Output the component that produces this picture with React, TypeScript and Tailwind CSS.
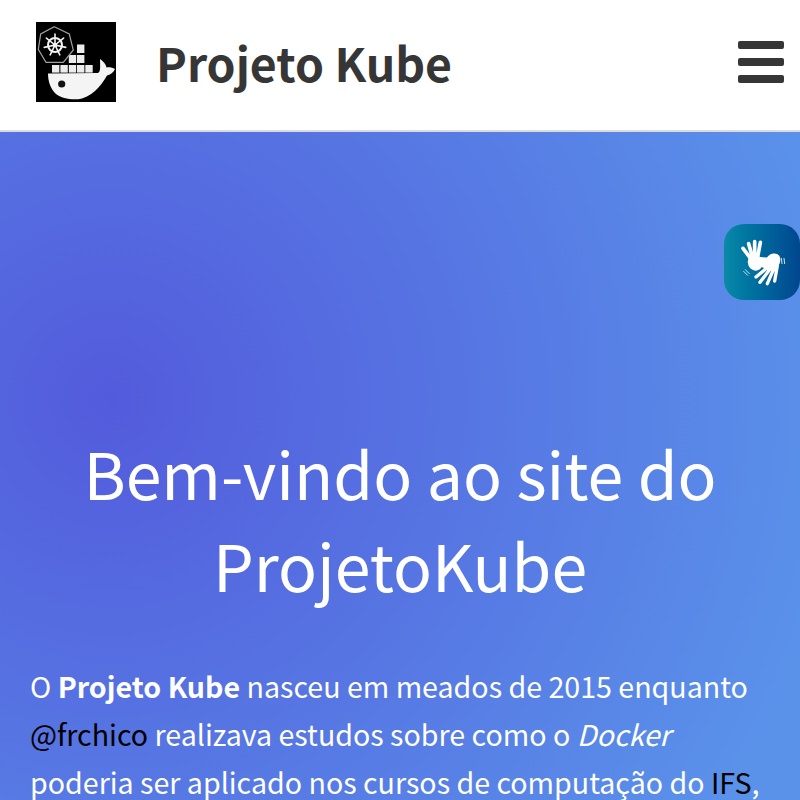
const font = "font-['Noto_Sans_CJK_JP','Source_Sans_Pro',sans-serif]";

function Logo() {
  return (
    <svg viewBox="0 0 80 80" className="w-20 h-20 bg-black shrink-0">
      {/* containers */}
      <g fill="#ececec">
        <rect x="16" y="43" width="7.4" height="7.6" />
        <rect x="24.4" y="43" width="7.4" height="7.6" />
        <rect x="32.8" y="43" width="7.4" height="7.6" />
        <rect x="41" y="43" width="7.4" height="7.6" />
        <rect x="49.3" y="43" width="7.4" height="7.6" />
        <rect x="32.8" y="33" width="7.4" height="8" />
        <rect x="41" y="33" width="7.4" height="8" />
        <rect x="41" y="22.5" width="7.4" height="8.5" />
      </g>
      {/* whale */}
      <path
        d="M12 51.5 L62 51 C65 50 64 43 64 37 C67 39 70 42 70.5 45.5 C73 45 76.5 45.5 79 47 C77 51 74 53 71 53.5 C67 60 60 72 46 76.5 C38 78.5 26 77 20 72 C14.5 67 12 59 12 51.5 Z"
        fill="#f4f4f4"
      />
      <circle cx="25.7" cy="62" r="3.6" fill="#111" />
      {/* kubernetes badge */}
      <polygon
        points="18.3,4.7 33.3,12 37.3,28 27.3,40.3 10,40.3 2.3,27.3 4.7,12"
        fill="#000"
        stroke="#a0a0a0"
        strokeWidth="1.2"
      />
      <g stroke="#f2f2f2" fill="none" strokeLinecap="round">
        <circle cx="19" cy="23" r="7" strokeWidth="2" />
        <circle cx="19" cy="23" r="1.6" strokeWidth="1.4" />
        <path
          d="M19 23V12M19 23L27.6 16.1M19 23L29.7 25.4M19 23L23.8 32.9M19 23L14.2 32.9M19 23L8.3 25.4M19 23L10.4 16.1"
          strokeWidth="1.6"
        />
      </g>
    </svg>
  );
}

function HandsIcon() {
  return (
    <svg viewBox="42 27 228 228" className="w-full h-full" fill="none" stroke="#fff" strokeLinecap="round" strokeLinejoin="round">
      {/* left hand */}
      <path d="M99 100L120 128M116 86L126 122M134 80L134 122M151 82L143 126" strokeWidth="11" />
      <path d="M118 130C112 144 118 160 134 164C144 166 152 160 154 152L138 140L150 128L130 120Z" fill="#fff" strokeWidth="5" />
      {/* right hand */}
      <path d="M134 128L172 130C182 116 198 114 206 124C212 136 206 154 192 162L178 166L150 150Z" fill="#fff" strokeWidth="5" />
      <path d="M174 156L138 186M182 160L150 202M192 160L172 206M202 152L194 198" strokeWidth="10" />
      {/* motion marks */}
      <path d="M214 130L216 146M222 130L224 146M106 164L118 176M101 169L113 181" strokeWidth="3" stroke="#cfe4ee" />
    </svg>
  );
}

export default function App() {
  return (
    <div className={`relative h-[800px] overflow-hidden ${font}`}>
      {/* Navbar */}
      <nav className="h-[132px] bg-white border-b-2 border-[#dbdbdb] flex items-center pl-9 pr-4 pb-[16px]">
        <div className="pt-[10px] flex items-center">
          <Logo />
          <span className="ml-[40px] text-[46.4px] leading-[72px] font-bold text-[#363636]">Projeto Kube</span>
        </div>
        <div className="ml-auto flex flex-col gap-[9px] w-[46px] pt-[10px]">
          <span className="h-[8px] rounded-[2px] bg-[#363636]" />
          <span className="h-[8px] rounded-[2px] bg-[#363636]" />
          <span className="h-[8px] rounded-[2px] bg-[#363636]" />
        </div>
      </nav>

      {/* Hero */}
      <section className="h-[668px] px-[30px] pt-[294px] text-white bg-[radial-gradient(circle_at_110px_268px,#535bdc_0px,#5a92ea_740px)]">
        <h1 className="text-[64.4px] leading-[92px] font-normal text-center">
          Bem-vindo ao site do
          <br />
          ProjetoKube
        </h1>
        <p className="mt-[52px] text-[28.6px] leading-[48px] whitespace-nowrap">
          O <strong className="font-bold">Projeto Kube</strong> nasceu em meados de 2015 enquanto
          <br />
          <a className="text-black">@frchico</a> realizava estudos sobre como o <em>Docker</em>
          <br />
          poderia ser aplicado nos cursos de computação do <a className="text-black">IFS</a>,
        </p>
      </section>

      {/* Accessibility widget */}
      <div className="absolute left-[724px] top-[224px] w-[76px] h-[76px] rounded-[20px] bg-gradient-to-r from-[#0a8aa8] to-[#00468f]">
        <HandsIcon />
      </div>
    </div>
  );
}
